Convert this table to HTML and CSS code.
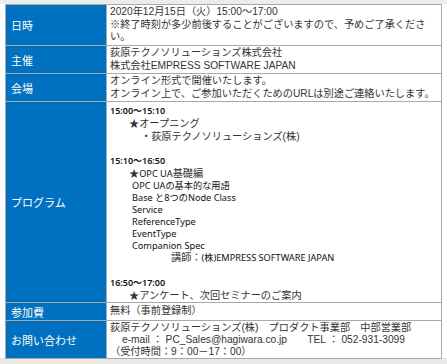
FILE: index.html
```html
<!DOCTYPE html>
<html lang="ja">
<head>
<meta charset="utf-8">
<link rel="stylesheet" href="styles.css">
</head>
<body>
<div class="page">
<table class="info">
  <tr class="r-date">
    <th>日時</th>
    <td>2020年12月15日（火）15:00～17:00<br>※終了時刻が多少前後することがございますので、予めご了承くださ<br>い。</td>
  </tr>
  <tr class="r-host">
    <th>主催</th>
    <td>荻原テクノソリューションズ株式会社<br>株式会社EMPRESS SOFTWARE JAPAN</td>
  </tr>
  <tr class="r-venue">
    <th>会場</th>
    <td>オンライン形式で開催いたします。<br>オンライン上で、ご参加いただくためのURLは別途ご連絡いたします。</td>
  </tr>
  <tr class="r-prog">
    <th>プログラム</th>
    <td>
      <div class="time">15:00～15:10</div>
      <div class="item">★オープニング</div>
      <div class="sub">・荻原テクノソリューションズ(株)</div>
      <div class="gap1"></div>
      <div class="time">15:10～16:50</div>
      <div class="item">★<span class="ui">OPC UA</span>基礎編</div>
      <div class="ui-line">OPC UAの基本的な用語</div>
      <div class="ui-line">Base と8つのNode Class</div>
      <div class="ui-line">Service</div>
      <div class="ui-line">ReferenceType</div>
      <div class="ui-line">EventType</div>
      <div class="ui-line">Companion Spec</div>
      <div class="lecturer">講師：<span class="ui">(株)EMPRESS SOFTWARE JAPAN</span></div>
      <div class="gap2"></div>
      <div class="time">16:50～17:00</div>
      <div class="item">★アンケート、次回セミナーのご案内</div>
    </td>
  </tr>
  <tr class="r-fee">
    <th>参加費</th>
    <td>無料（事前登録制）</td>
  </tr>
  <tr class="r-contact">
    <th>お問い合わせ</th>
    <td>荻原テクノソリューションズ(株)　プロダクト事業部　中部営業部<br><span class="ind">e-mail ： PC_Sales@hagiwara.co.jp　　TEL ： 052-931-3099</span><br>（受付時間：9：00－17：00）</td>
  </tr>
</table>
</div>
</body>
</html>
```

FILE: styles.css
```css
html, body {
  margin: 0;
  padding: 0;
  background: #ffffff;
}

.page {
  width: 447px;
  height: 364px;
  box-sizing: border-box;
  padding: 4px 5px 0 5px;
  overflow: hidden;
  background: linear-gradient(#ececec, #ececec) top left / 100% 4px no-repeat,
              linear-gradient(#e8e8e8, #e8e8e8) bottom left / 100% 6px no-repeat,
              #ffffff;
}

.info {
  width: 437px;
  border-collapse: collapse;
  table-layout: fixed;
  font-family: "Liberation Sans", "Noto Sans CJK JP", sans-serif;
  font-size: 10.2px;
  color: #333333;
  background: #ffffff;
}

.info th,
.info td {
  border: 1px solid #a9a9a9;
  padding: 0;
  white-space: nowrap;
  overflow: hidden;
}

.info th {
  width: 95px;
  background: #0070c0;
  color: #ffffff;
  font-weight: normal;
  text-align: left;
  padding-left: 5px;
  vertical-align: middle;
  font-size: 11px;
}

.info td {
  vertical-align: top;
  padding: 1px 0 0 3px;
  line-height: 12.6px;
}

.r-date { height: 41px; }
.r-host { height: 28px; }
.r-venue { height: 28px; }
.r-prog { height: 201px; }
.r-fee { height: 18px; }
.r-fee td { padding-top: 2px; }
.r-contact { height: 37px; }
.r-contact td { line-height: 12px; }

.ind { padding-left: 12px; }

.r-prog td {
  padding-top: 2px;
}

.time {
  font-family: "Noto Sans", "Noto Sans CJK JP", sans-serif;
  font-size: 9px;
  font-weight: 600;
  height: 13px;
  line-height: 13px;
  color: #111111;
}

.item {
  padding-left: 19px;
  height: 13px;
  line-height: 13px;
}

.sub {
  padding-left: 31px;
  height: 13px;
  line-height: 13px;
}

.ui,
.ui-line {
  font-family: "Noto Sans", "Noto Sans CJK JP", sans-serif;
  font-size: 9.2px;
  color: #111111;
}

.ui-line {
  padding-left: 22px;
  height: 12px;
  line-height: 12px;
}

.lecturer {
  padding-left: 61px;
  height: 12px;
  line-height: 12px;
}

.gap1 { height: 11px; }
.gap2 { height: 12px; }
```
